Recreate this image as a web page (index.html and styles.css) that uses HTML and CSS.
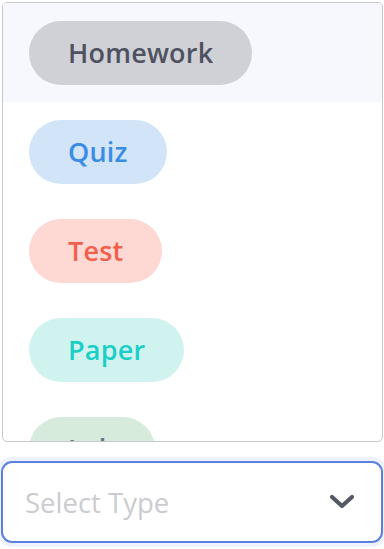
FILE: index.html
```html
<!DOCTYPE html>
<html>
<head>
<meta charset="utf-8">
<link rel="stylesheet" href="styles.css">
</head>
<body>
<div class="page">
  <div class="menu">
    <div class="option active"><span class="chip chip-homework">Homework</span></div>
    <div class="option"><span class="chip chip-quiz">Quiz</span></div>
    <div class="option"><span class="chip chip-test">Test</span></div>
    <div class="option"><span class="chip chip-paper">Paper</span></div>
    <div class="option"><span class="chip chip-lab">Lab</span></div>
  </div>
  <div class="select">
    <span class="placeholder">Select Type</span>
    <svg class="chevron" width="26" height="16" viewBox="0 0 26 16"><path d="M3 3 L13 12 L23 3" fill="none" stroke="#555965" stroke-width="4.2" stroke-linecap="round" stroke-linejoin="round"/></svg>
  </div>
</div>
</body>
</html>
```
FILE: styles.css
```css
html, body {
  margin: 0;
  padding: 0;
  background: #ffffff;
}
body {
  font-family: "Open Sans", "Noto Sans", sans-serif;
}
.page {
  width: 384px;
  height: 549px;
  padding: 2px 1px 0 2px;
  box-sizing: border-box;
  display: flex;
  flex-direction: column;
}
.menu {
  height: 440px;
  border: 1px solid #c9c9cb;
  border-radius: 5px;
  overflow: hidden;
  box-sizing: border-box;
  display: flex;
  flex-direction: column;
  flex-shrink: 0;
}
.option {
  padding: 17.5px 26px 17.5px 26px;
  display: flex;
  flex-shrink: 0;
}
.option.active {
  background: #f6f8fd;
}
.chip {
  height: 64px;
  border-radius: 32px;
  padding: 0 39px;
  display: inline-flex;
  align-items: center;
  font-size: 27px;
  font-weight: 600;
  letter-spacing: 0.2px;
  box-sizing: border-box;
}
.chip-homework { background: #d0d1d6; color: #4e5260; }
.chip-quiz { background: #d1e4f8; color: #3b8ce4; }
.chip-test { background: #fed8d3; color: #f0604c; }
.chip-paper { background: #d1f3f0; color: #1bcfc7; }
.chip-lab { background: #d7ebdd; color: #6b707c; }
.select {
  margin: 19px 0 0 -1px;
  height: 82px;
  border: 2px solid #5a80e3;
  border-radius: 11px;
  box-shadow: 0 0 0 4px #eef2fc;
  box-sizing: border-box;
  display: flex;
  align-items: center;
  justify-content: space-between;
  padding: 0 26px 0 22px;
}
.placeholder {
  font-size: 27.5px;
  color: #cbccd0;
}
.chevron {
  display: block;
}
```
